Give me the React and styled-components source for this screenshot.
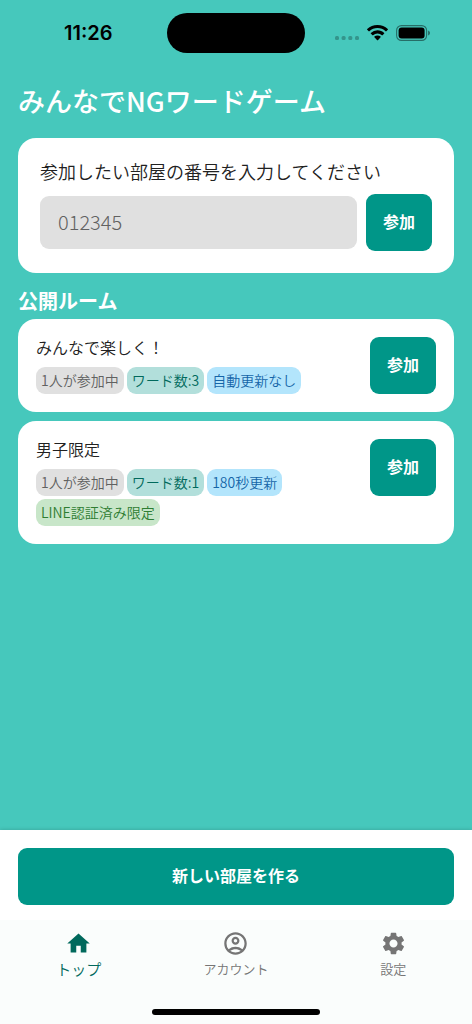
import React, { useState } from "react";
import { createGlobalStyle, styled } from "styled-components";
import { MdHome, MdOutlineAccountCircle, MdSettings } from "react-icons/md";

const rooms = [
  {
    id: 1,
    name: "みんなで楽しく！",
    tags: [
      { label: "1人が参加中", type: "member" },
      { label: "ワード数:3", type: "word" },
      { label: "自動更新なし", type: "update" },
    ],
  },
  {
    id: 2,
    name: "男子限定",
    tags: [
      { label: "1人が参加中", type: "member" },
      { label: "ワード数:1", type: "word" },
      { label: "180秒更新", type: "update" },
      { label: "LINE認証済み限定", type: "line" },
    ],
  },
];

const tabs = [
  { id: "top", label: "トップ", icon: MdHome },
  { id: "account", label: "アカウント", icon: MdOutlineAccountCircle },
  { id: "settings", label: "設定", icon: MdSettings },
];

const tagColors = {
  member: { background: "#e0e0e0", text: "#616161" },
  word: { background: "#b2dfdb", text: "#00695c" },
  update: { background: "#b3e5fc", text: "#1565a8" },
  line: { background: "#c8e6c9", text: "#2e7d32" },
};

function StatusBar() {
  return (
    <Status>
      <Time>11:26</Time>
      <Island />
      <StatusIcons>
        <Dots width="24" height="4" viewBox="0 0 24 4">
          <rect x="0" width="4" height="4" rx="1.5" />
          <rect x="6.6" width="4" height="4" rx="1.5" />
          <rect x="13.3" width="4" height="4" rx="1.5" />
          <rect x="20" width="4" height="4" rx="1.5" />
        </Dots>
        <svg width="21" height="16" viewBox="0 0 21 16">
          <path d="M10.5 0C14.5 0 18.1 1.5 20.8 4.1c.2.2.2.5 0 .7l-1.5 1.5c-.2.2-.5.2-.7 0A11.8 11.8 0 0 0 10.5 3.1 11.8 11.8 0 0 0 2.4 6.3c-.2.2-.5.2-.7 0L.2 4.8c-.2-.2-.2-.5 0-.7A14.8 14.8 0 0 1 10.5 0Z" />
          <path d="M10.5 5.3c2.6 0 4.9 1 6.7 2.6.2.2.2.5 0 .7l-1.6 1.6c-.2.2-.5.2-.7 0a6.5 6.5 0 0 0-8.8 0c-.2.2-.5.2-.7 0L3.8 8.6c-.2-.2-.2-.5 0-.7a9.8 9.8 0 0 1 6.7-2.6Z" />
          <path d="M10.5 10.5c1.2 0 2.3.4 3.1 1.1.2.2.2.5 0 .7l-2.7 2.9c-.2.2-.5.2-.7 0l-2.8-2.9c-.2-.2-.2-.5 0-.7.8-.7 1.9-1.1 3.1-1.1Z" />
        </svg>
        <svg width="34" height="16" viewBox="0 0 34 16">
          <rect
            x="0.6"
            y="0.6"
            width="30"
            height="14.8"
            rx="4.8"
            fill="none"
            stroke="#000"
            strokeOpacity="0.45"
            strokeWidth="1.1"
          />
          <rect x="2.6" y="2.6" width="26" height="10.8" rx="3" />
          <path d="M32.2 5.5c1.1.4 1.7 1.3 1.7 2.5s-.6 2.1-1.7 2.5z" opacity="0.5" />
        </svg>
      </StatusIcons>
    </Status>
  );
}

function RoomCard({ room }) {
  return (
    <Room>
      <RoomInfo>
        <RoomName>{room.name}</RoomName>
        <Tags>
          {room.tags.map((tag) => (
            <Tag key={tag.label} $type={tag.type}>
              {tag.label}
            </Tag>
          ))}
        </Tags>
      </RoomInfo>
      <JoinButton type="button">参加</JoinButton>
    </Room>
  );
}

function App() {
  const [roomNumber, setRoomNumber] = useState("");
  const [activeTab, setActiveTab] = useState("top");

  return (
    <Page>
      <GlobalStyle />
      <StatusBar />
      <Main>
        <Title>みんなでNGワードゲーム</Title>
        <EntryForm onSubmit={(e) => e.preventDefault()}>
          <EntryLabel htmlFor="room-number">
            参加したい部屋の番号を入力してください
          </EntryLabel>
          <EntryRow>
            <EntryInput
              id="room-number"
              inputMode="numeric"
              placeholder="012345"
              value={roomNumber}
              onChange={(e) => setRoomNumber(e.target.value)}
            />
            <JoinButton type="submit">参加</JoinButton>
          </EntryRow>
        </EntryForm>
        <SectionTitle>公開ルーム</SectionTitle>
        <RoomList>
          {rooms.map((room) => (
            <RoomCard key={room.id} room={room} />
          ))}
        </RoomList>
      </Main>
      <CreateBar>
        <CreateButton type="button">新しい部屋を作る</CreateButton>
      </CreateBar>
      <Footer>
        <Nav>
          {tabs.map(({ id, label, icon: Icon }) => (
            <NavButton
              key={id}
              type="button"
              $active={activeTab === id}
              onClick={() => setActiveTab(id)}
            >
              <Icon size={27} />
              <NavLabel $active={activeTab === id}>{label}</NavLabel>
            </NavButton>
          ))}
        </Nav>
        <HomeIndicator />
      </Footer>
    </Page>
  );
}

export default App;

const GlobalStyle = createGlobalStyle`
  * {
    box-sizing: border-box;
  }

  body {
    margin: 0;
    color: #212121;
    font-family: "Noto Sans CJK JP", sans-serif;
  }

  button,
  input {
    font-family: inherit;
  }
`;

const Page = styled.div`
  min-height: 100vh;
  display: flex;
  flex-direction: column;
  background-color: #46c8bc;
`;

const Status = styled.div`
  display: grid;
  grid-template-columns: 1fr auto 1fr;
  align-items: center;
  padding: 13px 42px 0 64px;
`;

const Time = styled.span`
  font-family: Inter, sans-serif;
  font-size: 20px;
  line-height: 24px;
  font-weight: 600;
  color: black;
`;

const Island = styled.div`
  width: 138px;
  height: 40px;
  margin-right: 22px;
  border-radius: 20px;
  background-color: black;
`;

const StatusIcons = styled.div`
  display: flex;
  align-items: center;
  justify-content: flex-end;
  gap: 8px;
`;

const Dots = styled.svg`
  margin-top: 10px;
  opacity: 0.25;
`;

const Main = styled.main`
  flex: 1;
  padding: 28px 18px;
`;

const Title = styled.h1`
  margin: 0 0 17px;
  font-size: 27px;
  line-height: 40px;
  font-weight: 500;
  color: white;
`;

const EntryForm = styled.form`
  padding: 20px 22px 22px;
  border-radius: 18px;
  background-color: white;
`;

const EntryLabel = styled.label`
  display: block;
  margin-bottom: 10px;
  font-size: 18px;
  line-height: 26px;
  font-weight: 350;
`;

const EntryRow = styled.div`
  display: flex;
  align-items: center;
  gap: 9px;
`;

const EntryInput = styled.input`
  flex: 1;
  min-width: 0;
  height: 53px;
  padding: 0 18px 2px;
  border: none;
  border-radius: 9px;
  background-color: #e0e0e0;
  color: #212121;
  font-size: 20px;
  font-weight: 300;

  &::placeholder {
    color: #616161;
  }
`;

const JoinButton = styled.button`
  flex: none;
  width: 66px;
  height: 57px;
  padding: 0 0 3px;
  border: none;
  border-radius: 9px;
  background-color: #009688;
  color: white;
  font-size: 16px;
  font-weight: 700;
  cursor: pointer;
`;

const SectionTitle = styled.h2`
  margin: 14px 0 4px;
  font-size: 20px;
  line-height: 28px;
  font-weight: 700;
  color: white;
`;

const RoomList = styled.div`
  display: flex;
  flex-direction: column;
  gap: 9px;
`;

const Room = styled.article`
  display: flex;
  align-items: flex-start;
  gap: 18px;
  padding: 18px;
  border-radius: 18px;
  background-color: white;
`;

const RoomInfo = styled.div`
  flex: 1;
  min-width: 0;
`;

const RoomName = styled.h3`
  margin: 0 0 10px;
  font-size: 16px;
  line-height: 20px;
  font-weight: 350;
`;

const Tags = styled.div`
  display: flex;
  flex-wrap: wrap;
  gap: 3px;
`;

const Tag = styled.span`
  padding: 0 5px;
  border-radius: 9px;
  background-color: ${(props) => tagColors[props.$type].background};
  color: ${(props) => tagColors[props.$type].text};
  font-size: 14px;
  line-height: 27px;
  font-weight: 350;
`;

const CreateBar = styled.div`
  padding: 18px 18px 15px;
  background-color: white;
  box-shadow: 0 0 4px rgba(0, 0, 0, 0.2);
`;

const CreateButton = styled.button`
  width: 100%;
  height: 57px;
  padding: 0 0 3px;
  border: none;
  border-radius: 9px;
  background-color: #009688;
  color: white;
  font-size: 16px;
  font-weight: 700;
  cursor: pointer;
`;

const Footer = styled.footer`
  position: relative;
  padding: 10px 0 9px;
  background-color: #fafdfc;
`;

const Nav = styled.nav`
  display: flex;
  margin-bottom: 29px;
`;

const NavButton = styled.button`
  flex: 1;
  display: flex;
  flex-direction: column;
  align-items: center;
  padding: 0;
  border: none;
  background: none;
  color: ${(props) => (props.$active ? "#00695c" : "#757575")};
  cursor: pointer;
`;

const NavLabel = styled.span`
  font-size: ${(props) => (props.$active ? "15px" : "13px")};
  line-height: 23px;
  font-weight: 350;
`;

const HomeIndicator = styled.div`
  width: 168px;
  height: 6px;
  margin: 0 auto;
  border-radius: 3px;
  background-color: black;
`;
